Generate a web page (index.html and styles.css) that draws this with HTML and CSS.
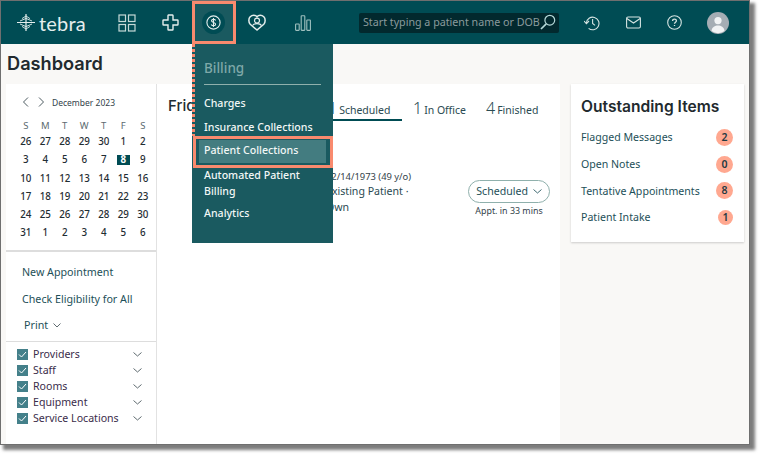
FILE: index.html
```html
<!DOCTYPE html>
<html lang="en">
<head>
    <meta charset="UTF-8">
    <title>Tebra Dashboard</title>
    <link rel="stylesheet" href="styles.css">
</head>
<body>
    <div class="window">
        <!-- Top navigation -->
        <header class="topbar">
            <div class="brand">
                <svg class="brand-mark" width="18" height="17" viewBox="0 0 18 17" fill="none" stroke="#e4eeed" stroke-width=".9">
                    <path d="M9 0V17M0 8.5H18" stroke-width="1.2"/>
                    <path d="M9 2L5 4.6M9 2L13 4.6M9 4.4L3 7M9 4.4L15 7M9 12.6L3 10M9 12.6L15 10M9 15L5 12.4M9 15L13 12.4"/>
                </svg>
                <span class="brand-name">tebra</span>
            </div>
            <nav class="nav">
                <div class="nav-item">
                    <svg width="18" height="18" viewBox="0 0 18 18" fill="none" stroke="#c5d9d7" stroke-width="1.2">
                        <rect x="1" y="1" width="6.5" height="6.5"/><rect x="10.5" y="1" width="6.5" height="6.5"/>
                        <rect x="1" y="10.5" width="6.5" height="6.5"/><rect x="10.5" y="10.5" width="6.5" height="6.5"/>
                    </svg>
                </div>
                <div class="nav-item">
                    <svg width="17" height="17" viewBox="0 0 17 17" fill="none" stroke="#e4eeed" stroke-width="1.4">
                        <path d="M6.5 1H10.5A.6.6 0 0 1 11 1.6V6H15.4A.6.6 0 0 1 16 6.6V10.4A.6.6 0 0 1 15.4 11H11V15.4A.6.6 0 0 1 10.4 16H6.6A.6.6 0 0 1 6 15.4V11H1.6A.6.6 0 0 1 1 10.4V6.6A.6.6 0 0 1 1.6 6H6V1.6A.6.6 0 0 1 6.5 1Z"/>
                    </svg>
                </div>
                <div class="nav-item nav-item-active">
                    <span class="nav-disc">
                        <svg width="15" height="15" viewBox="0 0 15 15" fill="none" stroke="#e4eeed" stroke-width="1.1">
                            <circle cx="7.5" cy="7.5" r="6.6"/>
                            <path d="M9.6 5.4C9.2 4.6 8.4 4.3 7.5 4.3C6.4 4.3 5.5 4.8 5.5 5.8C5.5 8 9.6 6.9 9.6 9.2C9.6 10.2 8.6 10.7 7.5 10.7C6.5 10.7 5.7 10.3 5.3 9.5M7.5 3V12"/>
                        </svg>
                    </span>
                </div>
                <div class="nav-item">
                    <svg width="18" height="17" viewBox="0 0 18 17" fill="none" stroke="#e4eeed" stroke-width="1.5">
                        <path d="M9 16L2.2 10.2C0.4 8.4 0.4 4.6 2.2 2.8C4.2 0.8 7.4 0.8 9 2.8C10.6 0.8 13.8 0.8 15.8 2.8C17.6 4.6 17.6 8.4 15.8 10.2Z"/>
                        <circle cx="9" cy="6.6" r="2.5" stroke-width="1.2"/>
                        <path d="M4.6 11.6C5.4 10 7.2 9.6 9 9.6C10.8 9.6 12.6 10 13.4 11.6" stroke-width="1.2"/>
                    </svg>
                </div>
                <div class="nav-item nav-item-wide">
                    <svg width="16" height="16" viewBox="0 0 16 16" fill="none" stroke="#9fc0bf" stroke-width="1.1">
                        <rect x="0.6" y="9" width="3.6" height="6.4" rx="0.6"/><rect x="6.2" y="0.8" width="3.6" height="14.6" rx="0.6"/><rect x="11.8" y="5" width="3.6" height="10.4" rx="0.6"/>
                    </svg>
                </div>
            </nav>
            <div class="search">
                <span class="search-text">Start typing a patient name or DOB</span>
                <svg class="search-icon" width="16" height="16" viewBox="0 0 16 16" fill="none" stroke="#b5d8d8" stroke-width="1.2">
                    <circle cx="9.8" cy="6.2" r="4.9"/><path d="M6.2 9.8L1 15" stroke-width="1.7"/>
                </svg>
            </div>
            <div class="top-icons">
                <svg width="16" height="16" viewBox="0 0 16 16" fill="none" stroke="#d5e4e2" stroke-width="1.1">
                    <path d="M2.4 8A6.3 6.3 0 1 1 4.6 13.3"/><path d="M0 6L2.4 8.6L5 6"/><path d="M8.6 4V8.4L11 10.4"/>
                </svg>
                <svg width="15" height="13" viewBox="0 0 15 13" fill="none" stroke="#d5e4e2" stroke-width="1.1">
                    <rect x="0.6" y="1" width="13.8" height="11" rx="1.4"/><path d="M0.8 2.5L7.5 7L14.2 2.5"/>
                </svg>
                <svg width="15" height="15" viewBox="0 0 15 15" fill="none" stroke="#d5e4e2" stroke-width="1.1">
                    <circle cx="7.5" cy="7.5" r="6.8"/>
                    <path d="M5.6 6C5.6 4.8 6.4 4.2 7.5 4.2C8.6 4.2 9.4 4.9 9.4 5.8C9.4 7.2 7.5 7.2 7.5 8.8M7.5 10V11" stroke-width="1.3"/>
                </svg>
                <svg class="avatar" width="22" height="22" viewBox="0 0 22 22">
                    <circle cx="11" cy="11" r="11" fill="#a5adb4"/>
                    <circle cx="11" cy="8.6" r="3.6" fill="#f1f3f4"/>
                    <path d="M4.5 19C5 15 8 13.6 11 13.6C14 13.6 17 15 17.5 19A11 11 0 0 1 4.5 19Z" fill="#f1f3f4"/>
                </svg>
            </div>
        </header>

        <h1 class="page-title">Dashboard</h1>

        <div class="content">
            <!-- Left column: calendar and filters -->
            <aside class="sidebar">
                <div class="calendar">
                    <div class="cal-head">
                        <svg width="7" height="10" viewBox="0 0 7 10" fill="none" stroke="#4d5a60" stroke-width="1"><path d="M6 .5L1.5 5L6 9.5"/></svg>
                        <svg width="7" height="10" viewBox="0 0 7 10" fill="none" stroke="#4d5a60" stroke-width="1"><path d="M1 .5L5.5 5L1 9.5"/></svg>
                        <span class="cal-month">December 2023</span>
                    </div>
                    <div class="cal-grid cal-days">
                        <span>S</span><span>M</span><span>T</span><span>W</span><span>T</span><span>F</span><span>S</span>
                    </div>
                    <div class="cal-grid cal-dates">
                        <span>26</span><span>27</span><span>28</span><span>29</span><span>30</span><span>1</span><span>2</span>
                        <span>3</span><span>4</span><span>5</span><span>6</span><span>7</span><span class="cal-today">8</span><span>9</span>
                        <span>10</span><span>11</span><span>12</span><span>13</span><span>14</span><span>15</span><span>16</span>
                        <span>17</span><span>18</span><span>19</span><span>20</span><span>21</span><span>22</span><span>23</span>
                        <span>24</span><span>25</span><span>26</span><span>27</span><span>28</span><span>29</span><span>30</span>
                        <span>31</span><span>1</span><span>2</span><span>3</span><span>4</span><span>5</span><span>6</span>
                    </div>
                </div>
                <div class="actions">
                    <div class="action">New Appointment</div>
                    <div class="action">Check Eligibility for All</div>
                    <div class="action action-print">Print
                        <svg width="8" height="5" viewBox="0 0 8 5" fill="none" stroke="#4d5a60" stroke-width=".9"><path d="M.5 .5L4 4L7.5 .5"/></svg>
                    </div>
                </div>
                <div class="filters">
                    <div class="filter"><span class="check"><svg width="11" height="11" viewBox="0 0 11 11" fill="none" stroke="#fff" stroke-width="1"><path d="M2 5.5L4.5 8L9 3"/></svg></span><span class="filter-name">Providers</span><svg width="9" height="5" viewBox="0 0 9 5" fill="none" stroke="#4d5a60" stroke-width=".9"><path d="M.5 .5L4.5 4L8.5 .5"/></svg></div>
                    <div class="filter"><span class="check"><svg width="11" height="11" viewBox="0 0 11 11" fill="none" stroke="#fff" stroke-width="1"><path d="M2 5.5L4.5 8L9 3"/></svg></span><span class="filter-name">Staff</span><svg width="9" height="5" viewBox="0 0 9 5" fill="none" stroke="#4d5a60" stroke-width=".9"><path d="M.5 .5L4.5 4L8.5 .5"/></svg></div>
                    <div class="filter"><span class="check"><svg width="11" height="11" viewBox="0 0 11 11" fill="none" stroke="#fff" stroke-width="1"><path d="M2 5.5L4.5 8L9 3"/></svg></span><span class="filter-name">Rooms</span><svg width="9" height="5" viewBox="0 0 9 5" fill="none" stroke="#4d5a60" stroke-width=".9"><path d="M.5 .5L4.5 4L8.5 .5"/></svg></div>
                    <div class="filter"><span class="check"><svg width="11" height="11" viewBox="0 0 11 11" fill="none" stroke="#fff" stroke-width="1"><path d="M2 5.5L4.5 8L9 3"/></svg></span><span class="filter-name">Equipment</span><svg width="9" height="5" viewBox="0 0 9 5" fill="none" stroke="#4d5a60" stroke-width=".9"><path d="M.5 .5L4.5 4L8.5 .5"/></svg></div>
                    <div class="filter"><span class="check"><svg width="11" height="11" viewBox="0 0 11 11" fill="none" stroke="#fff" stroke-width="1"><path d="M2 5.5L4.5 8L9 3"/></svg></span><span class="filter-name">Service Locations</span><svg width="9" height="5" viewBox="0 0 9 5" fill="none" stroke="#4d5a60" stroke-width=".9"><path d="M.5 .5L4.5 4L8.5 .5"/></svg></div>
                </div>
            </aside>

            <!-- Middle column: today's appointments -->
            <main class="schedule">
                <div class="schedule-head">
                    <h2 class="schedule-date">Frid</h2>
                    <div class="tabs">
                        <div class="tab tab-active"><span class="tab-num">1</span><span>Scheduled</span></div>
                        <div class="tab"><span class="tab-num">1</span><span>In Office</span></div>
                        <div class="tab"><span class="tab-num">4</span><span>Finished</span></div>
                    </div>
                </div>
                <div class="appt">
                    <div class="appt-info">
                        <div class="appt-dob">12/14/1973 (49 y/o)</div>
                        <div class="appt-line">Existing Patient ·</div>
                        <div class="appt-line">Own</div>
                    </div>
                    <div class="appt-status">
                        <div class="pill">Scheduled
                            <svg width="9" height="5" viewBox="0 0 9 5" fill="none" stroke="#2b5a62" stroke-width=".9"><path d="M.5 .5L4.5 4L8.5 .5"/></svg>
                        </div>
                        <div class="appt-when">Appt. in 33 mins</div>
                    </div>
                </div>
            </main>

            <!-- Right column -->
            <section class="outstanding">
                <h2 class="outstanding-title">Outstanding Items</h2>
                <div class="out-row"><span>Flagged Messages</span><span class="badge">2</span></div>
                <div class="out-row"><span>Open Notes</span><span class="badge">0</span></div>
                <div class="out-row"><span>Tentative Appointments</span><span class="badge">8</span></div>
                <div class="out-row"><span>Patient Intake</span><span class="badge badge-small">1</span></div>
            </section>
        </div>

        <!-- Billing dropdown, open over the page -->
        <div class="menu">
            <div class="menu-title">Billing</div>
            <div class="menu-item">Charges</div>
            <div class="menu-item">Insurance Collections</div>
            <div class="menu-item menu-item-selected">Patient Collections</div>
            <div class="menu-item menu-item-tall">Automated Patient Billing</div>
            <div class="menu-item">Analytics</div>
        </div>

        <!-- Callouts drawn on top of the screenshot -->
        <div class="callout callout-nav"></div>
        <div class="callout-dots"></div>
        <div class="callout callout-item"></div>
    </div>
</body>
</html>
```

FILE: styles.css
```css
* {
    box-sizing: border-box;
}
html, body {
    margin: 0;
    padding: 0;
    background: #fff;
}
body {
    width: 765px;
    height: 460px;
    overflow: hidden;
    font-family: "Noto Sans", Arial, sans-serif;
    color: #1f2d33;
}
h1, h2 {
    margin: 0;
}
.window {
    position: relative;
    width: 750px;
    height: 445px;
    background: #f9f8f6;
    border: 1px solid #6f6f6f;
    box-shadow: 4px 4px 3px 1px #7d7d7d;
    display: flex;
    flex-direction: column;
}
.topbar {
    height: 43px;
    flex: none;
    background: #004c54;
    display: flex;
    align-items: center;
}
.brand {
    width: 104px;
    flex: none;
    padding-left: 16px;
    display: flex;
    align-items: center;
    gap: 4px;
}
.brand-name {
    font-family: Lato, sans-serif;
    font-size: 20px;
    font-weight: 400;
    color: #e4eeed;
    letter-spacing: .2px;
}
.nav {
    display: flex;
    width: 245px;
    flex: none;
    height: 100%;
}
.nav-item {
    width: 43.5px;
    display: flex;
    align-items: center;
    justify-content: center;
}
.nav-item-wide {
    width: 48px;
}
.nav-item-active {
    background: #1a5a60;
}
.nav-disc {
    width: 23px;
    height: 23px;
    border-radius: 50%;
    background: #004c54;
    display: flex;
    align-items: center;
    justify-content: center;
}
.search {
    width: 200px;
    height: 20px;
    flex: none;
    margin-left: 9px;
    padding: 0 3px 1px 4px;
    background: #02292e;
    border-radius: 2px;
    display: flex;
    align-items: center;
    justify-content: space-between;
}
.search-text {
    font-size: 10.7px;
    color: #8b9b9d;
    white-space: nowrap;
}
.search-icon {
    flex: none;
}
.top-icons {
    display: flex;
    align-items: center;
    margin-left: 25px;
    gap: 26px;
}
.avatar {
    margin-left: -1px;
}
.page-title {
    height: 40px;
    flex: none;
    padding: 7px 0 0 6px;
    font-family: Inter, sans-serif;
    font-size: 18.2px;
    font-weight: 600;
    line-height: 25px;
    color: #222a2e;
}
.content {
    flex: 1;
    display: flex;
    min-height: 0;
    padding-left: 5px;
}
.sidebar {
    width: 151px;
    flex: none;
    background: #fff;
    border-right: 1px solid #e2e2e2;
}
.calendar {
    height: 168px;
    padding-top: 12px;
    border-bottom: 2px solid #dddddd;
}
.cal-head {
    display: flex;
    align-items: center;
    height: 12px;
    padding-left: 16px;
    gap: 9px;
}
.cal-month {
    font-size: 8.5px;
    margin-left: -2px;
    color: #33424a;
}
.cal-grid {
    display: grid;
    grid-template-columns: repeat(7, 19.5px);
    padding-left: 10px;
    text-align: center;
}
.cal-days {
    margin-top: 12px;
    font-size: 9.5px;
    line-height: 12px;
    color: #5d6b70;
}
.cal-dates {
    margin-top: 1px;
    font-size: 9.8px;
    font-weight: 500;
    grid-auto-rows: 18.3px;
    line-height: 18px;
    color: #1f2d33;
}
.cal-today {
    background: #004c54;
    color: #fff;
    font-weight: 700;
    height: 10px;
    line-height: 10px;
    margin: 4px 3px 0;
}
.actions {
    height: 90px;
    padding-top: 7px;
    border-bottom: 1px solid #dddddd;
}
.action {
    height: 26.6px;
    line-height: 26px;
    padding-left: 16px;
    font-size: 10.7px;
    color: #1d4f58;
    white-space: nowrap;
}
.action-print {
    padding-left: 18px;
}
.action-print svg {
    margin-left: 2px;
    vertical-align: 1px;
}
.filters {
    padding: 4px 0 0 11px;
}
.filter {
    display: flex;
    align-items: center;
    height: 16px;
    font-size: 10.6px;
    color: #3a2c4a;
}
.check {
    width: 11px;
    height: 11px;
    background: #44808a;
    flex: none;
    display: flex;
}
.filter-name {
    margin-left: 5px;
    width: 100px;
    white-space: nowrap;
}
.schedule {
    width: 403px;
    flex: none;
    background: #fff;
    padding: 0 10px 0 11px;
}
.schedule-head {
    display: flex;
    height: 37px;
}
.schedule-date {
    width: 150px;
    flex: none;
    padding-top: 11px;
    font-family: Inter, sans-serif;
    font-size: 15px;
    font-weight: 500;
    line-height: 22px;
}
.tabs {
    display: flex;
    flex: none;
    padding-top: 13px;
    margin-left: -21px;
}
.tab {
    height: 24px;
    flex: none;
    font-size: 10.5px;
    line-height: 22px;
    color: #2a4a52;
    white-space: nowrap;
    margin-right: 20px;
}
.tab-num {
    font-size: 16px;
    font-weight: 300;
    margin-right: 2px;
}
.tab-active {
    width: 105px;
    margin-right: 11px;
    padding-left: 31px;
    border-bottom: 2px solid #004c54;
}
.appt {
    display: flex;
    justify-content: space-between;
    padding: 49px 0 0 158px;
}
.appt-dob {
    font-size: 9.4px;
    line-height: 13px;
    color: #33424a;
}
.appt-line {
    font-size: 10.6px;
    line-height: 16px;
    color: #2a4a52;
}
.appt-status {
    margin-top: 10px;
    text-align: center;
}
.pill {
    width: 82px;
    height: 23px;
    border: 1px solid #8fb0ac;
    border-radius: 12px;
    font-size: 10.6px;
    line-height: 20px;
    color: #1d4f58;
}
.pill svg {
    margin-left: 2px;
    vertical-align: 1px;
}
.appt-when {
    margin-top: 2px;
    font-size: 8.9px;
    line-height: 12px;
    color: #33424a;
    white-space: nowrap;
}
.outstanding {
    width: 173px;
    height: 158px;
    margin-left: 11px;
    padding: 13px 11px 0 10px;
    background: #fff;
    box-shadow: 0 1px 2px rgba(0, 0, 0, 0.18);
}
.outstanding-title {
    font-family: Inter, sans-serif;
    font-size: 15.6px;
    font-weight: 600;
    line-height: 20px;
    color: #222a2e;
    margin-bottom: 7px;
    white-space: nowrap;
}
.out-row {
    display: flex;
    align-items: center;
    justify-content: space-between;
    height: 26.7px;
    font-size: 10.6px;
    color: #1d4f58;
}
.badge {
    width: 17px;
    height: 17px;
    border-radius: 50%;
    background: #ffa890;
    text-align: center;
    font-size: 10.5px;
    font-weight: 600;
    line-height: 17px;
    color: #1f3a42;
}
.badge-small {
    width: 15px;
    height: 15px;
    line-height: 15px;
}
.menu {
    position: absolute;
    left: 191px;
    top: 43px;
    width: 141px;
    height: 199px;
    padding: 14px 12px 0 12px;
    background: #1a5a60;
    color: #f2f7f6;
}
.menu-title {
    height: 27px;
    font-size: 13.5px;
    font-weight: 500;
    line-height: 20px;
    color: #7fa8a8;
    border-bottom: 1px solid #8fb0ac;
    margin-bottom: 6px;
}
.menu-item {
    font-size: 10.6px;
    font-weight: 500;
    line-height: 16px;
    height: 23.8px;
    padding-top: 4px;
}
.menu-item-selected {
    margin: 1.4px -5px 0;
    padding: 2px 5px 0;
    background: #437c80;
    height: 23px;
}
.menu-item-tall {
    height: 37.6px;
    padding-top: 3.6px;
}
.callout {
    position: absolute;
    border: 3px solid #f98a6e;
}
.callout-nav {
    left: 191px;
    top: 0;
    width: 44px;
    height: 43px;
}
.callout-dots {
    position: absolute;
    left: 191px;
    top: 43px;
    width: 3px;
    height: 92px;
    background: repeating-linear-gradient(#f98a6e 0 3px, transparent 3px 5px);
}
.callout-item {
    left: 192px;
    top: 135px;
    width: 140px;
    height: 32px;
}
```
